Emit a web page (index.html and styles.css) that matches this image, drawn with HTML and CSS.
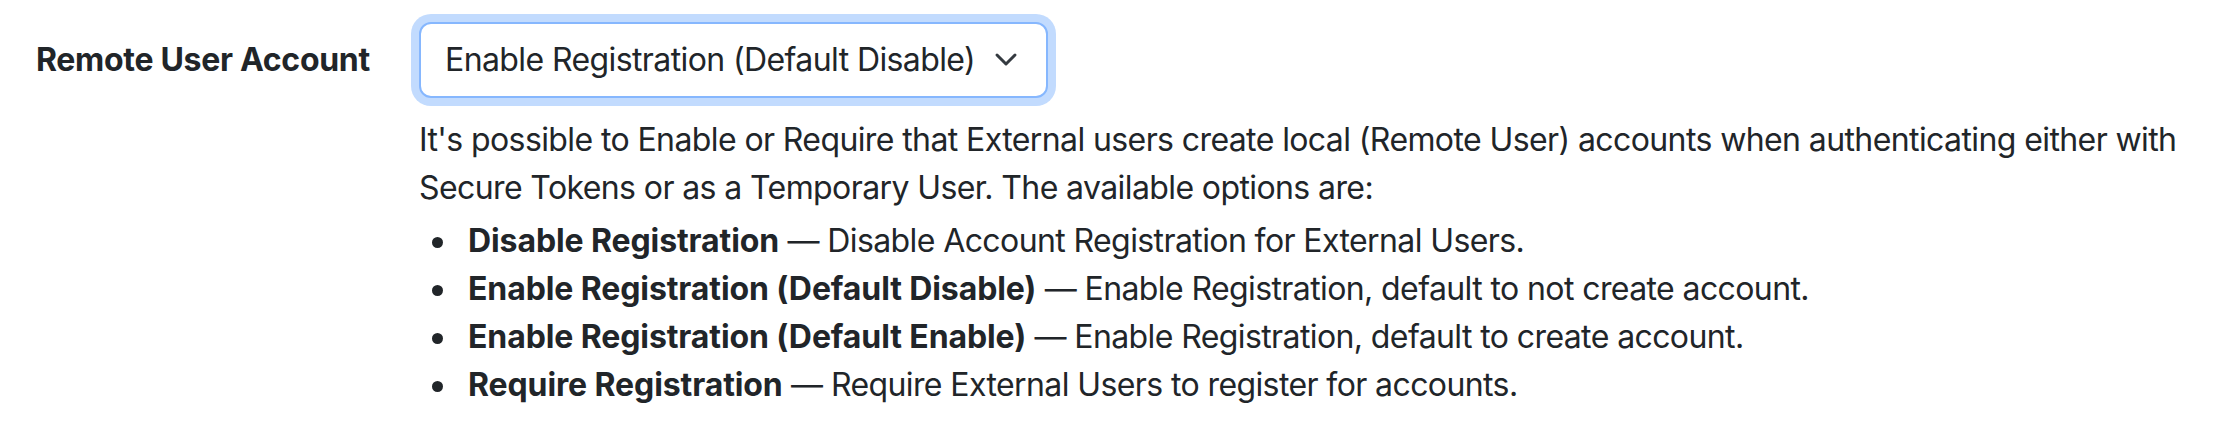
FILE: index.html
```html
<!DOCTYPE html>
<html lang="en">
<head>
<meta charset="utf-8">
<title>Remote User Account</title>
<link rel="stylesheet" href="styles.css">
</head>
<body>
<div class="field">
  <div class="field-label">Remote User Account</div>
  <div class="field-control">
    <div class="select">
      <span class="select-value">Enable Registration (Default Disable)</span>
      <svg class="chevron" width="32" height="24" viewBox="0 0 16 12" aria-hidden="true">
        <path d="M3.5 3.5 8 8l4.5-4.5" fill="none" stroke="#343a40" stroke-width="1.5" stroke-linecap="round" stroke-linejoin="round"/>
      </svg>
    </div>
    <div class="help">
      <p class="help-intro">It's possible to Enable or Require that External users create local (Remote User) accounts when authenticating either with Secure Tokens or as a Temporary User. The available options are:</p>
      <ul class="options">
        <li><strong>Disable Registration</strong> — Disable Account Registration for External Users.</li>
        <li><strong>Enable Registration (Default Disable)</strong> — Enable Registration, default to not create account.</li>
        <li><strong>Enable Registration (Default Enable)</strong> — Enable Registration, default to create account.</li>
        <li><strong>Require Registration</strong> — Require External Users to register for accounts.</li>
      </ul>
    </div>
  </div>
</div>
</body>
</html>
```
FILE: styles.css
```css
html, body {
  margin: 0;
  padding: 0;
  background: #ffffff;
}

body {
  font-family: Inter, "Noto Sans", "Liberation Sans", sans-serif;
  font-size: 32px;
  line-height: 48px;
  color: #212529;
}

.field {
  display: flex;
  padding: 22px 0 0 36px;
}

.field-label {
  flex: 0 0 383px;
  padding-top: 14px;
  font-weight: 700;
  letter-spacing: -0.3px;
}

.field-control {
  flex: 1;
  min-width: 0;
}

.select {
  box-sizing: border-box;
  width: 629px;
  height: 76px;
  display: flex;
  align-items: center;
  padding: 12px 24px 12px 24px;
  border: 2px solid #86b7fe;
  border-radius: 12px;
  box-shadow: 0 0 0 8px rgba(13, 110, 253, 0.25);
  background: #ffffff;
}

.select-value {
  flex: 1;
  min-width: 0;
  overflow: hidden;
  white-space: nowrap;
  letter-spacing: -0.6px;
}

.chevron {
  flex: 0 0 32px;
  display: block;
}

.help {
  margin-top: 18px;
}

.help-intro {
  margin: 0;
  letter-spacing: -0.6px;
}

.options {
  list-style: none;
  margin: 5px 0 0 0;
  padding: 0;
  letter-spacing: -0.6px;
}

.options li {
  position: relative;
  padding-left: 49px;
}

.options li::before {
  content: "";
  position: absolute;
  left: 13px;
  top: 20px;
  width: 11px;
  height: 11px;
  border-radius: 50%;
  background: #212529;
}

.options strong {
  font-weight: 700;
  letter-spacing: -0.1px;
}
```
